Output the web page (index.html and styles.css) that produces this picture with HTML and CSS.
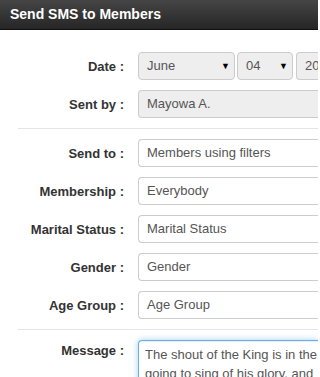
FILE: index.html
```html
<!DOCTYPE html>
<html>
<head>
<meta charset="utf-8">
<link rel="stylesheet" href="styles.css">
</head>
<body>
<div class="panel">
  <div class="panel-heading">Send SMS to Members</div>
  <form class="form">
    <div class="row">
      <label class="lbl">Date :</label>
      <div class="ctrl date">
        <div class="sel sel-month"><span>June</span><span class="arr">&#9660;</span></div>
        <div class="sel sel-day"><span>04</span><span class="arr">&#9660;</span></div>
        <div class="sel sel-year"><span>20</span></div>
      </div>
    </div>
    <div class="row">
      <label class="lbl">Sent by :</label>
      <div class="ctrl"><div class="inp readonly">Mayowa A.</div></div>
    </div>
    <hr class="sep">
    <div class="row">
      <label class="lbl">Send to :</label>
      <div class="ctrl"><div class="inp">Members using filters</div></div>
    </div>
    <div class="row">
      <label class="lbl">Membership :</label>
      <div class="ctrl"><div class="inp">Everybody</div></div>
    </div>
    <div class="row">
      <label class="lbl">Marital Status :</label>
      <div class="ctrl"><div class="inp">Marital Status</div></div>
    </div>
    <div class="row">
      <label class="lbl">Gender :</label>
      <div class="ctrl"><div class="inp">Gender</div></div>
    </div>
    <div class="row">
      <label class="lbl">Age Group :</label>
      <div class="ctrl"><div class="inp">Age Group</div></div>
    </div>
    <hr class="sep">
    <div class="row row-top">
      <label class="lbl lbl-top">Message :</label>
      <div class="ctrl"><div class="textarea">The shout of the King is in the
going to sing of his glory, and</div></div>
    </div>
  </form>
</div>
</body>
</html>
```
FILE: styles.css
```css
html, body {
  margin: 0;
  padding: 0;
  background: #fff;
  overflow: hidden;
}
body {
  font-family: "Liberation Sans", Arial, sans-serif;
  font-size: 13px;
  color: #333;
  width: 318px;
}
.panel {
  width: 318px;
}
.panel-heading {
  height: 29px;
  line-height: 29px;
  padding-left: 10px;
  background: linear-gradient(#454545, #262626);
  border-bottom: 1px solid #111;
  color: #fff;
  font-weight: bold;
  font-size: 14px;
}
.form {
  padding-top: 22px;
}
.row {
  display: flex;
  align-items: center;
  margin-bottom: 10px;
}
.row-top {
  align-items: flex-start;
}
.lbl {
  width: 124px;
  text-align: right;
  font-weight: bold;
  flex: none;
  padding-right: 14px;
  box-sizing: content-box;
}
.lbl-top {
  padding-top: 3px;
}
.ctrl {
  flex: 1;
  display: flex;
  min-width: 0;
}
.inp, .sel, .textarea {
  height: 28px;
  box-sizing: border-box;
  border: 1px solid #ccc;
  border-radius: 4px;
  padding: 0 8px;
  line-height: 26px;
  color: #555;
  background: #fff;
  white-space: nowrap;
  overflow: hidden;
}
.inp {
  flex: 1;
  border-right: 0;
  border-top-right-radius: 0;
  border-bottom-right-radius: 0;
}
.readonly {
  background: #eee;
}
.date {
  gap: 2px;
}
.sel {
  background: #eee;
  display: flex;
  justify-content: space-between;
  align-items: center;
  padding-right: 4px;
  flex: none;
}
.sel-month { width: 97px; }
.sel-day { width: 56px; }
.sel-year {
  flex: 1;
  margin-left: 1px;
  border-right: 0;
  border-top-right-radius: 0;
  border-bottom-right-radius: 0;
}
.arr {
  font-size: 9px;
  color: #000;
  line-height: 1;
}
.sep {
  border: 0;
  border-top: 1px solid #e5e5e5;
  margin: 0 0 10px 18px;
  height: 0;
}
.textarea {
  flex: 1;
  height: 80px;
  white-space: pre;
  line-height: 19px;
  padding: 4px 6px;
  border-color: #66afe9;
  border-right: 0;
  border-top-right-radius: 0;
  border-bottom-right-radius: 0;
  box-shadow: inset 0 1px 1px rgba(0,0,0,.075), 0 0 6px rgba(102,175,233,.6);
}
```
